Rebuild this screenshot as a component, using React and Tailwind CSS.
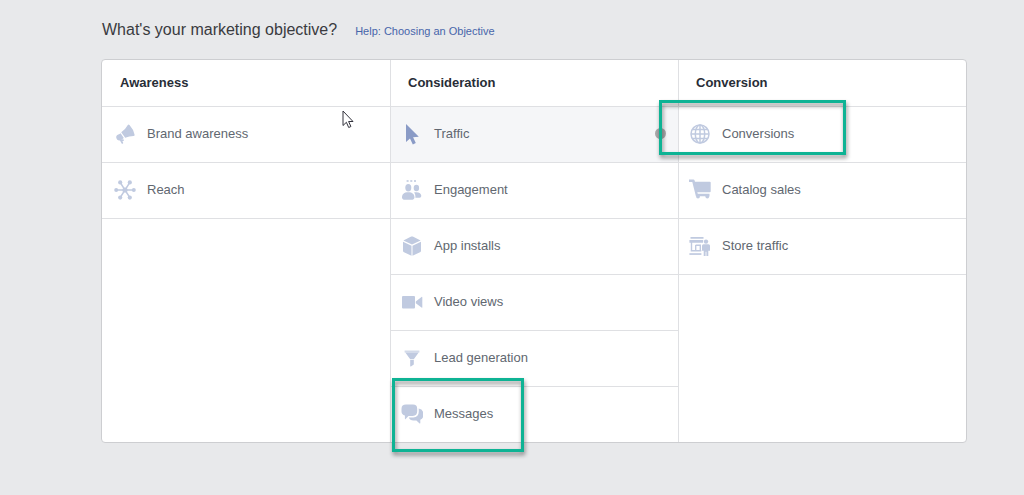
const iconProps = {
  viewBox: '0 0 22 22',
  className: 'size-[22px] shrink-0',
  fill: 'currentColor',
  'aria-hidden': true,
};

function MegaphoneIcon() {
  return (
    <svg {...iconProps}>
      <path d="M13.8 2q.9-.8 1.700.1 4 4.400 5.100 9.600.2 1.300-1.100 1.300-4.200 0-8.300 1.800L7.200 9.300Q11.500 6.400 13.800 2z" />
      <path d="M6.600 10.200 9.800 15q-1.300 1.600-3.600 2.300a3.100 3.100 0 0 1-3.900-2.200c-.4-1.700.5-3 2-3.500q1.300-.4 2.300-1.400z" />
      <path d="M6.500 16.500l1.800 3.400M7.600 17.500l1.400-.3" fill="none" stroke="currentColor" strokeWidth="1.8" strokeLinecap="round" />
    </svg>
  );
}

function ReachIcon() {
  return (
    <svg {...iconProps}>
      <path d="M2 11h18M6.300 3.600l9.400 14.800M15.700 3.600 6.300 18.400" stroke="currentColor" strokeWidth="1.600" />
      <circle cx="11" cy="11" r="2.600" />
      <circle cx="2.200" cy="11" r="2" />
      <circle cx="19.800" cy="11" r="2" />
      <circle cx="6.200" cy="3.400" r="2.100" />
      <circle cx="15.800" cy="3.400" r="2.100" />
      <circle cx="6.200" cy="18.600" r="2.100" />
      <circle cx="15.800" cy="18.600" r="2.100" />
    </svg>
  );
}

function PointerIcon() {
  return (
    <svg {...iconProps}>
      <path d="M5 1v18l4-3.600 2.800 6.100 3-1.400-2.700-5.900 5.700-.4z" />
    </svg>
  );
}

function PeopleIcon() {
  return (
    <svg {...iconProps}>
      <path d="M5.600 1h2v2h-2zM9.300 1h2v2h-2zM13 1h2v2h-2z" opacity=".8" />
      <ellipse cx="7.300" cy="8.800" rx="3" ry="3.700" />
      <ellipse cx="15.400" cy="9" rx="2.700" ry="3.200" />
      <path d="M1 18.200c0-3 2-5 6.200-5s6.200 2 6.200 5c0 1.900-1.400 2.500-2.800 2.500H3.800C2.400 20.700 1 20.100 1 18.200z" />
      <path d="M13 13.600c.8-.3 1.500-.4 2.400-.4 3 0 4.900 1.500 4.900 3.600 0 1.700-1.300 2-2.700 2h-3.200c.1-2.100-.1-3.800-1.400-5.200z" />
    </svg>
  );
}

function CubeIcon() {
  return (
    <svg {...iconProps}>
      <path d="M10.200 1.600q.8-.4 1.600 0l7.800 3.900L11 9.500 2.400 5.500z" />
      <path d="M2 6.700l8.500 4v10L3 17.300q-1-.5-1-1.500zM20 6.700l-8.500 4v10l7.500-3.400q1-.5 1-1.500z" />
    </svg>
  );
}

function CameraIcon() {
  return (
    <svg {...iconProps}>
      <rect x="1" y="5" width="13" height="12.500" rx="1" />
      <path d="M14.800 10.600 20.500 6q.8-.4.8.4v9.800q0 .8-.8.400l-5.700-4.400z" />
    </svg>
  );
}

function FunnelIcon() {
  return (
    <svg {...iconProps}>
      <path d="M3.600 3.500h14.800v2H3.600z" opacity=".7" />
      <path d="M4.300 5.500h13.400l-4.900 6.700H9.200zM9.200 13h3.600v4.500L9.900 19.400q-.7.300-.7-.4z" />
    </svg>
  );
}

function ChatIcon() {
  return (
    <svg {...iconProps}>
      <path d="M5 1.500h7q4.200 0 4.200 4.200v2.600q0 4.600-4.500 4.600H7.500L4.600 16q-.7.500-.7-.4v-3Q.5 11.700.5 8.600V5.700Q.5 1.500 5 1.500z" />
      <path d="M17.600 5.600q4.700.7 4.700 5v1.600q0 3.500-3 4.600v3.300q0 .8-.7.300l-3.200-3h-3q-3.500 0-4.600-2.900h4.400q5.600-.2 5.600-6.200 0-1.400-.2-2.700z" />
    </svg>
  );
}

function GlobeIcon() {
  return (
    <svg {...iconProps} fill="none" stroke="currentColor" strokeWidth="1.500">
      <circle cx="11" cy="11" r="9" />
      <ellipse cx="11" cy="11" rx="4.700" ry="9" />
      <path d="M11 2v18M2 11h18M3.600 6.500h14.800M3.600 15.500h14.800" />
    </svg>
  );
}

function CartIcon() {
  return (
    <svg {...iconProps}>
      <path d="M0 .5h4.500q.8 0 1 .8L6 2.700h14.800q.9 0 .9.900v8.700q0 .9-.9.900H8.300l.5 1.600h11.700v2.500H6.900L3.300 2.900H0z" />
      <circle cx="9" cy="17.600" r="1.900" />
      <circle cx="18.300" cy="17.600" r="1.900" />
    </svg>
  );
}

function StoreIcon() {
  return (
    <svg {...iconProps}>
      <path d="M1.500 2h13v1.700h-13zM.4 5h15l-.8 2.700H.4z" />
      <path d="M2.500 7v9.500M1.700 15.700h10.600M6.700 15.500V10M6.700 10.300h4.600v5" fill="none" stroke="currentColor" strokeWidth="1.400" />
      <path d="M.4 18.200h12v1.700H.4z" />
      <circle cx="17" cy="6.600" r="3" fill="#fff" />
      <circle cx="17" cy="6.600" r="2.200" />
      <path d="M14.500 9.300h5q1.500 0 1.500 1.500v5h-1.700V21h-1.900v-4.300h-.8V21h-1.900v-5.200H13v-5q0-1.500 1.500-1.500z" />
    </svg>
  );
}

const columns = [
  {
    title: 'Awareness',
    items: [
      { label: 'Brand awareness', icon: MegaphoneIcon },
      { label: 'Reach', icon: ReachIcon },
    ],
  },
  {
    title: 'Consideration',
    items: [
      { label: 'Traffic', icon: PointerIcon, active: true },
      { label: 'Engagement', icon: PeopleIcon },
      { label: 'App installs', icon: CubeIcon },
      { label: 'Video views', icon: CameraIcon },
      { label: 'Lead generation', icon: FunnelIcon },
      { label: 'Messages', icon: ChatIcon, frame: 'left-px -top-[9px] w-[132px] h-[74px]' },
    ],
  },
  {
    title: 'Conversion',
    items: [
      { label: 'Conversions', icon: GlobeIcon, frame: '-left-5 -top-[7px] w-[187px] h-[55px]' },
      { label: 'Catalog sales', icon: CartIcon },
      { label: 'Store traffic', icon: StoreIcon },
    ],
  },
];

function Objective({ label, icon: Icon, active, frame, first }) {
  return (
    <li className="relative border-b border-[#dfe0e3] nth-6:border-b-0">
      <button
        type="button"
        className={`flex h-[55px] w-full items-center gap-[11px] pr-3 pb-0.5 text-left text-[13px] text-[#616770] ${first ? 'pl-3' : 'pl-2.5'} ${active ? 'bg-[#f5f6f8]' : ''}`}
      >
        <span className={active ? 'text-[#8a9bc6]' : 'text-[#c0cae0]'}>
          <Icon />
        </span>
        {label}
        {active && <span className="ml-auto size-[11px] rounded-full bg-[#a9a9ab]" />}
      </button>
      {frame && (
        <span
          className={`pointer-events-none absolute z-10 border-[3px] border-[#0eb394] drop-shadow-[1px_3px_2px_rgba(0,0,0,0.45)] ${frame}`}
        />
      )}
    </li>
  );
}

function MouseCursor() {
  return (
    <svg
      viewBox="0 0 12 19"
      className="pointer-events-none absolute top-[50px] right-[36px] h-[19px] w-3"
      aria-hidden="true"
    >
      <path
        d="M1 1v14.500l3.400-3.200 2.300 5.200 2.200-1-2.300-5h4.400z"
        fill="#fff"
        stroke="#33333d"
        strokeWidth="1"
      />
    </svg>
  );
}

export default function App() {
  return (
    <main className="min-h-screen bg-[#e8e9eb] pt-[18px] pr-[57px] pb-[51px] pl-[101px] font-['Liberation_Sans',Arial,sans-serif]">
      <header className="flex items-baseline gap-[18px] pl-px">
        <h1 className="text-[16px] leading-6 text-[#3a3b3f]">What's your marketing objective?</h1>
        <a href="#help" className="text-[11px] text-[#4765aa]">
          Help: Choosing an Objective
        </a>
      </header>

      <div className="mt-[17px] grid grid-cols-3 rounded border border-[#cdced1] bg-white">
        {columns.map((column, i) => (
          <section key={column.title} className={`relative ${i > 0 ? 'border-l border-[#dfe0e3]' : ''}`}>
            <h2 className={`flex h-[47px] items-center border-b border-[#dfe0e3] text-[13px] font-bold text-[#282d37] ${i > 0 ? 'pl-[17px]' : 'pl-[18px]'}`}>
              {column.title}
            </h2>
            <ul>
              {column.items.map((item) => (
                <Objective key={item.label} first={i === 0} {...item} />
              ))}
            </ul>
            {i === 0 && <MouseCursor />}
          </section>
        ))}
      </div>
    </main>
  );
}
